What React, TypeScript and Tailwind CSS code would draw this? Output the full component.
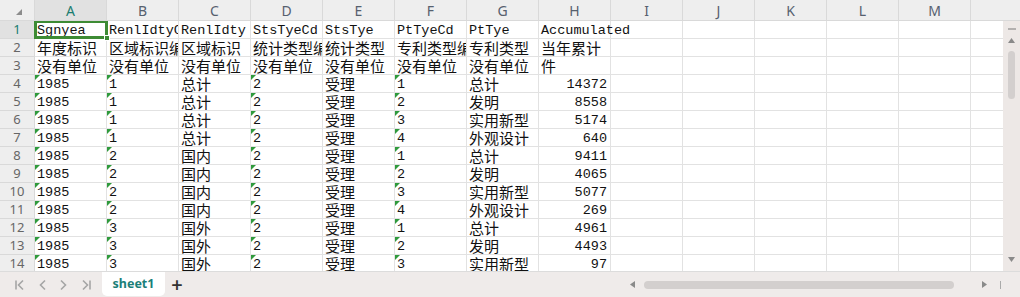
import React from "react";

const cols = ["A", "B", "C", "D", "E", "F", "G", "H", "I", "J", "K", "L", "M"];

const rows: string[][] = [
  ["Sgnyea", "RenlIdtyCd", "RenlIdty", "StsTyeCd", "StsTye", "PtTyeCd", "PtTye", "Accumulated"],
  ["年度标识", "区域标识编码", "区域标识", "统计类型编码", "统计类型", "专利类型编码", "专利类型", "当年累计"],
  ["没有单位", "没有单位", "没有单位", "没有单位", "没有单位", "没有单位", "没有单位", "件"],
  ["1985", "1", "总计", "2", "受理", "1", "总计", "14372"],
  ["1985", "1", "总计", "2", "受理", "2", "发明", "8558"],
  ["1985", "1", "总计", "2", "受理", "3", "实用新型", "5174"],
  ["1985", "1", "总计", "2", "受理", "4", "外观设计", "640"],
  ["1985", "2", "国内", "2", "受理", "1", "总计", "9411"],
  ["1985", "2", "国内", "2", "受理", "2", "发明", "4065"],
  ["1985", "2", "国内", "2", "受理", "3", "实用新型", "5077"],
  ["1985", "2", "国内", "2", "受理", "4", "外观设计", "269"],
  ["1985", "3", "国外", "2", "受理", "1", "总计", "4961"],
  ["1985", "3", "国外", "2", "受理", "2", "发明", "4493"],
  ["1985", "3", "国外", "2", "受理", "3", "实用新型", "97"],
];

const isCJK = (s: string) => /[\u4e00-\u9fff]/.test(s);

function Cell({ value, r, c }: { value?: string; r: number; c: number }) {
  const flagged = r >= 3 && (c === 0 || c === 1 || c === 3 || c === 5);
  const numeric = r >= 3 && c === 7;
  const spill = r === 0 && c === 7;
  return (
    <div
      className={`relative h-[18px] w-[72px] shrink-0 border-r border-b border-[#e2e2e2] whitespace-nowrap ${
        spill ? "z-10 overflow-visible" : "overflow-hidden"
      }`}
    >
      {flagged && (
        <div className="absolute top-0 left-0 h-0 w-0 border-t-[5px] border-r-[5px] border-t-[#2f9a3c] border-r-transparent" />
      )}
      {value && (
        <div
          className={
            isCJK(value)
              ? "pl-[2px] font-['Noto_Sans_CJK_SC',sans-serif] text-[15px] leading-[18px] text-[#111]"
              : `${numeric ? "pr-[3px] text-right" : "pl-[2px]"} font-['Liberation_Mono','Noto_Sans_CJK_SC',monospace] text-[13.5px] leading-[19px] text-[#111]`
          }
        >
          {value}
        </div>
      )}
    </div>
  );
}

function Tri({ dir, className }: { dir: "up" | "down" | "left" | "right"; className?: string }) {
  const pts = {
    up: "0,5 3.5,0 7,5",
    down: "0,0 3.5,5 7,0",
    left: "5,0 0,3.5 5,7",
    right: "0,0 5,3.5 0,7",
  }[dir];
  const vb = dir === "up" || dir === "down" ? "0 0 7 5" : "0 0 5 7";
  return (
    <svg viewBox={vb} className={className}>
      <polygon points={pts} fill="#8a8a8a" />
    </svg>
  );
}

function Chevron({ d, bar }: { d: "l" | "r"; bar?: boolean }) {
  return (
    <svg viewBox="0 0 12 12" className="h-[12px] w-[12px]">
      {d === "l" ? (
        <>
          {bar && <line x1="2" y1="1.5" x2="2" y2="10.5" stroke="#a5a5a5" strokeWidth="1.6" />}
          <polyline points="9,1.5 4.5,6 9,10.5" fill="none" stroke="#a5a5a5" strokeWidth="1.6" />
        </>
      ) : (
        <>
          <polyline points="3,1.5 7.5,6 3,10.5" fill="none" stroke="#a5a5a5" strokeWidth="1.6" />
          {bar && <line x1="10" y1="1.5" x2="10" y2="10.5" stroke="#a5a5a5" strokeWidth="1.6" />}
        </>
      )}
    </svg>
  );
}

export default function App() {
  return (
    <div className="flex h-[297px] w-[1020px] flex-col overflow-hidden bg-white font-['Noto_Sans',sans-serif]">
      {/* column headers */}
      <div className="flex h-[21px] shrink-0 bg-[#eeeeee]">
        <div className="relative w-[35px] shrink-0 border-r border-b border-[#d9d9d9]">
          <div className="absolute right-[12px] bottom-[5px] h-0 w-0 border-b-[6px] border-l-[6px] border-b-[#8c8c8c] border-l-transparent" />
        </div>
        {cols.map((c, i) => (
          <div
            key={c}
            className={`flex w-[72px] shrink-0 items-center justify-center border-r border-b border-[#d9d9d9] text-[14px] ${
              i === 0 ? "bg-[#e1e1e1] text-[#1a7d70]" : "text-[#56606e]"
            }`}
          >
            {c}
          </div>
        ))}
        <div className="flex-1 border-b border-[#d9d9d9]" />
      </div>

      {/* body */}
      <div className="flex min-h-0 flex-1">
        <div className="relative min-w-0 flex-1 overflow-hidden">
          {rows.map((row, r) => (
            <div key={r} className="flex">
              <div
                className={`flex h-[18px] w-[35px] shrink-0 items-center justify-center border-r border-b border-[#d9d9d9] text-[13px] ${
                  r === 0 ? "bg-[#e1e1e1] text-[#1a7d70]" : "bg-[#eeeeee] text-[#666]"
                }`}
              >
                {r + 1}
              </div>
              {cols.map((_, c) => (
                <Cell key={c} value={row[c]} r={r} c={c} />
              ))}
              <div className="h-[18px] flex-1 border-b border-[#e2e2e2]" />
            </div>
          ))}
          {/* selection box on A1 */}
          <div className="pointer-events-none absolute top-[-1px] left-[34px] z-20 h-[19px] w-[74px] border-[3px] border-[#3d8b34]">
            <div className="absolute right-[-5px] bottom-[-5px] h-[6px] w-[6px] border border-white bg-[#3d8b34]" />
          </div>
        </div>
        {/* vertical scrollbar */}
        <div className="flex w-[17px] shrink-0 flex-col items-center bg-[#ede8e6] pt-[7px] pb-[9px]">
          <div className="h-[2px] w-[8px] bg-[#b3b0af]" />
          <Tri dir="up" className="mt-[8px] h-[5px] w-[7px]" />
          <div className="mt-[8px] h-[48px] w-[7px] rounded-full bg-[#d3cfce]" />
          <div className="flex-1" />
          <Tri dir="down" className="h-[5px] w-[7px]" />
        </div>
      </div>

      {/* sheet tabs bar */}
      <div className="flex h-[26px] shrink-0 items-stretch border-t border-[#dcdcdc] bg-[#efebea]">
        <div className="flex w-[102px] items-center gap-[10px] pl-[14px]">
          <Chevron d="l" bar />
          <Chevron d="l" />
          <Chevron d="r" />
          <Chevron d="r" bar />
        </div>
        <div className="mb-[1px] flex w-[63px] items-center justify-center rounded-b-[5px] bg-white text-[12.5px] font-bold text-[#1b7f79]">
          sheet1
        </div>
        <div className="flex w-[24px] items-center justify-center text-[20px] leading-none font-semibold text-[#333]">
          +
        </div>
        <div className="flex-1" />
        <div className="flex w-[400px] items-center">
          <Tri dir="left" className="ml-[10px] h-[7px] w-[5px]" />
          <div className="ml-[9px] h-[8px] w-[310px] rounded-full bg-[#d3cfce]" />
          <div className="flex-1" />
          <Tri dir="right" className="h-[7px] w-[5px]" />
          <div className="mr-[19px] ml-[13px] h-[8px] w-[1px] bg-[#aaa]" />
        </div>
      </div>
    </div>
  );
}
